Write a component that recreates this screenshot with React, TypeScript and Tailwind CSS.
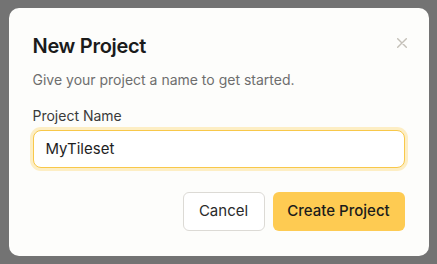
import React from "react";

export default function App() {
  return (
    <div
      className="w-[437px] h-[264px] bg-[#737373] flex items-center justify-center"
      style={{ fontFamily: "Inter, 'Noto Sans', sans-serif" }}
    >
      <div className="relative w-[420px] bg-[#fdfdfb] rounded-[10px] px-6 pt-6 pb-[25px]">
        <button className="absolute right-[22px] top-[30px] text-[#c4c0b8]">
          <svg width="10" height="10" viewBox="0 0 10 10" fill="none" stroke="currentColor" strokeWidth="1.4" strokeLinecap="round">
            <path d="M0.7 0.7 L9.3 9.3 M9.3 0.7 L0.7 9.3" />
          </svg>
        </button>
        <h2 className="text-[20px] leading-[28px] font-semibold text-[#1b1b1b] tracking-[-0.3px]">New Project</h2>
        <p className="mt-[10px] text-[14px] leading-[20px] text-[#6e6e6e]">
          Give your project a name to get started.
        </p>
        <label className="block mt-4 text-[14px] leading-[20px] text-[#3a3a3a]">Project Name</label>
        <div className="mt-1 rounded-[8px] border-[1.5px] border-[#f8c84a] ring-[3px] ring-[#fdeec4] bg-white h-[38px] flex items-center px-3">
          <span className="text-[15px] text-[#1e1e1e]">MyTileset</span>
        </div>
        <div className="mt-6 flex justify-end gap-2">
          <button className="h-[39px] w-[82px] rounded-[6px] border border-[#dcdad5] bg-white text-[15px] text-[#2a2a2a]">
            Cancel
          </button>
          <button className="h-[39px] w-[132px] rounded-[6px] bg-[#fecb52] text-[15px] font-medium text-[#1b1b1b]">
            Create Project
          </button>
        </div>
      </div>
    </div>
  );
}
